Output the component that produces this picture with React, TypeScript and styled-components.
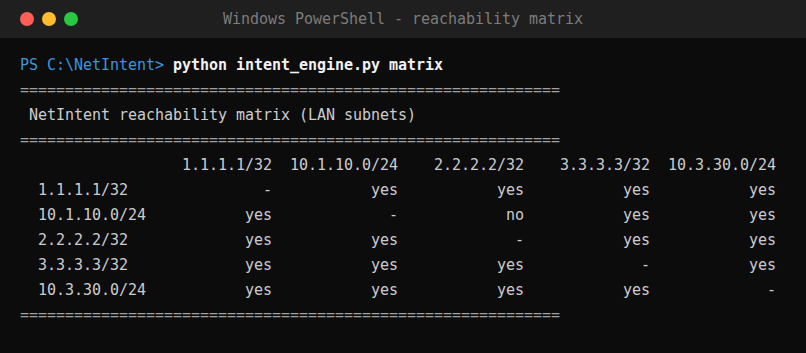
import React from "react";
import styled, { createGlobalStyle } from "styled-components";

const Global = createGlobalStyle`
  html, body { margin: 0; padding: 0; background: #0c0c0c; }
  body { width: 806px; height: 353px; overflow: hidden; }
`;

const Window = styled.div`
  width: 806px;
  height: 353px;
  background: #0c0c0c;
  display: flex;
  flex-direction: column;
`;

const TitleBar = styled.div`
  height: 38px;
  flex: 0 0 38px;
  background: #1f1f1f;
  position: relative;
  display: flex;
  align-items: center;
  justify-content: center;
`;

const Lights = styled.div`
  position: absolute;
  left: 20px;
  top: 12px;
  display: flex;
  gap: 8px;
`;

const Light = styled.span<{ $c: string }>`
  width: 14px;
  height: 14px;
  border-radius: 50%;
  background: ${(p) => p.$c};
`;

const Title = styled.div`
  font-family: "DejaVu Sans Mono", monospace;
  font-size: 15px;
  letter-spacing: -0.03px;
  color: #7c7c7c;
`;

const Body = styled.div`
  padding: 15px 0 0 20px;
  font-family: "DejaVu Sans Mono", monospace;
  font-size: 15px;
  letter-spacing: -0.03px;
  line-height: 25px;
  color: #cccccc;
  white-space: pre;
`;

const Line = styled.div`
  height: 25px;
`;

const Prompt = styled.span`
  color: #3a96dd;
`;

const Cmd = styled.span`
  color: #f2f2f2;
  font-weight: bold;
`;

const Rule = styled(Line)`
  color: #a0a0a0;
`;

const Table = styled.div`
  display: grid;
  grid-template-columns: repeat(6, 126px);
  grid-auto-rows: 25px;
`;

const Cell = styled.div<{ $label?: boolean }>`
  text-align: ${(p) => (p.$label ? "left" : "right")};
  padding-left: ${(p) => (p.$label ? "18px" : "0")};
`;

const nets = ["1.1.1.1/32", "10.1.10.0/24", "2.2.2.2/32", "3.3.3.3/32", "10.3.30.0/24"];
const matrix = [
  ["-", "yes", "yes", "yes", "yes"],
  ["yes", "-", "no", "yes", "yes"],
  ["yes", "yes", "-", "yes", "yes"],
  ["yes", "yes", "yes", "-", "yes"],
  ["yes", "yes", "yes", "yes", "-"],
];

const rule = "=".repeat(60);

export default function App() {
  return (
    <>
      <Global />
      <Window>
        <TitleBar>
          <Lights>
            <Light $c="#ff5f57" />
            <Light $c="#febc2e" />
            <Light $c="#28c840" />
          </Lights>
          <Title>Windows PowerShell - reachability matrix</Title>
        </TitleBar>
        <Body>
          <Line>
            <Prompt>PS C:\NetIntent&gt; </Prompt>
            <Cmd>python intent_engine.py matrix</Cmd>
          </Line>
          <Rule>{rule}</Rule>
          <Line> NetIntent reachability matrix (LAN subnets)</Line>
          <Rule>{rule}</Rule>
          <Table>
            <Cell $label />
            {nets.map((n) => (
              <Cell key={"h" + n}>{n}</Cell>
            ))}
            {nets.map((n, i) => (
              <React.Fragment key={n}>
                <Cell $label>{n}</Cell>
                {matrix[i].map((v, j) => (
                  <Cell key={j}>{v}</Cell>
                ))}
              </React.Fragment>
            ))}
          </Table>
          <Rule>{rule}</Rule>
        </Body>
      </Window>
    </>
  );
}
